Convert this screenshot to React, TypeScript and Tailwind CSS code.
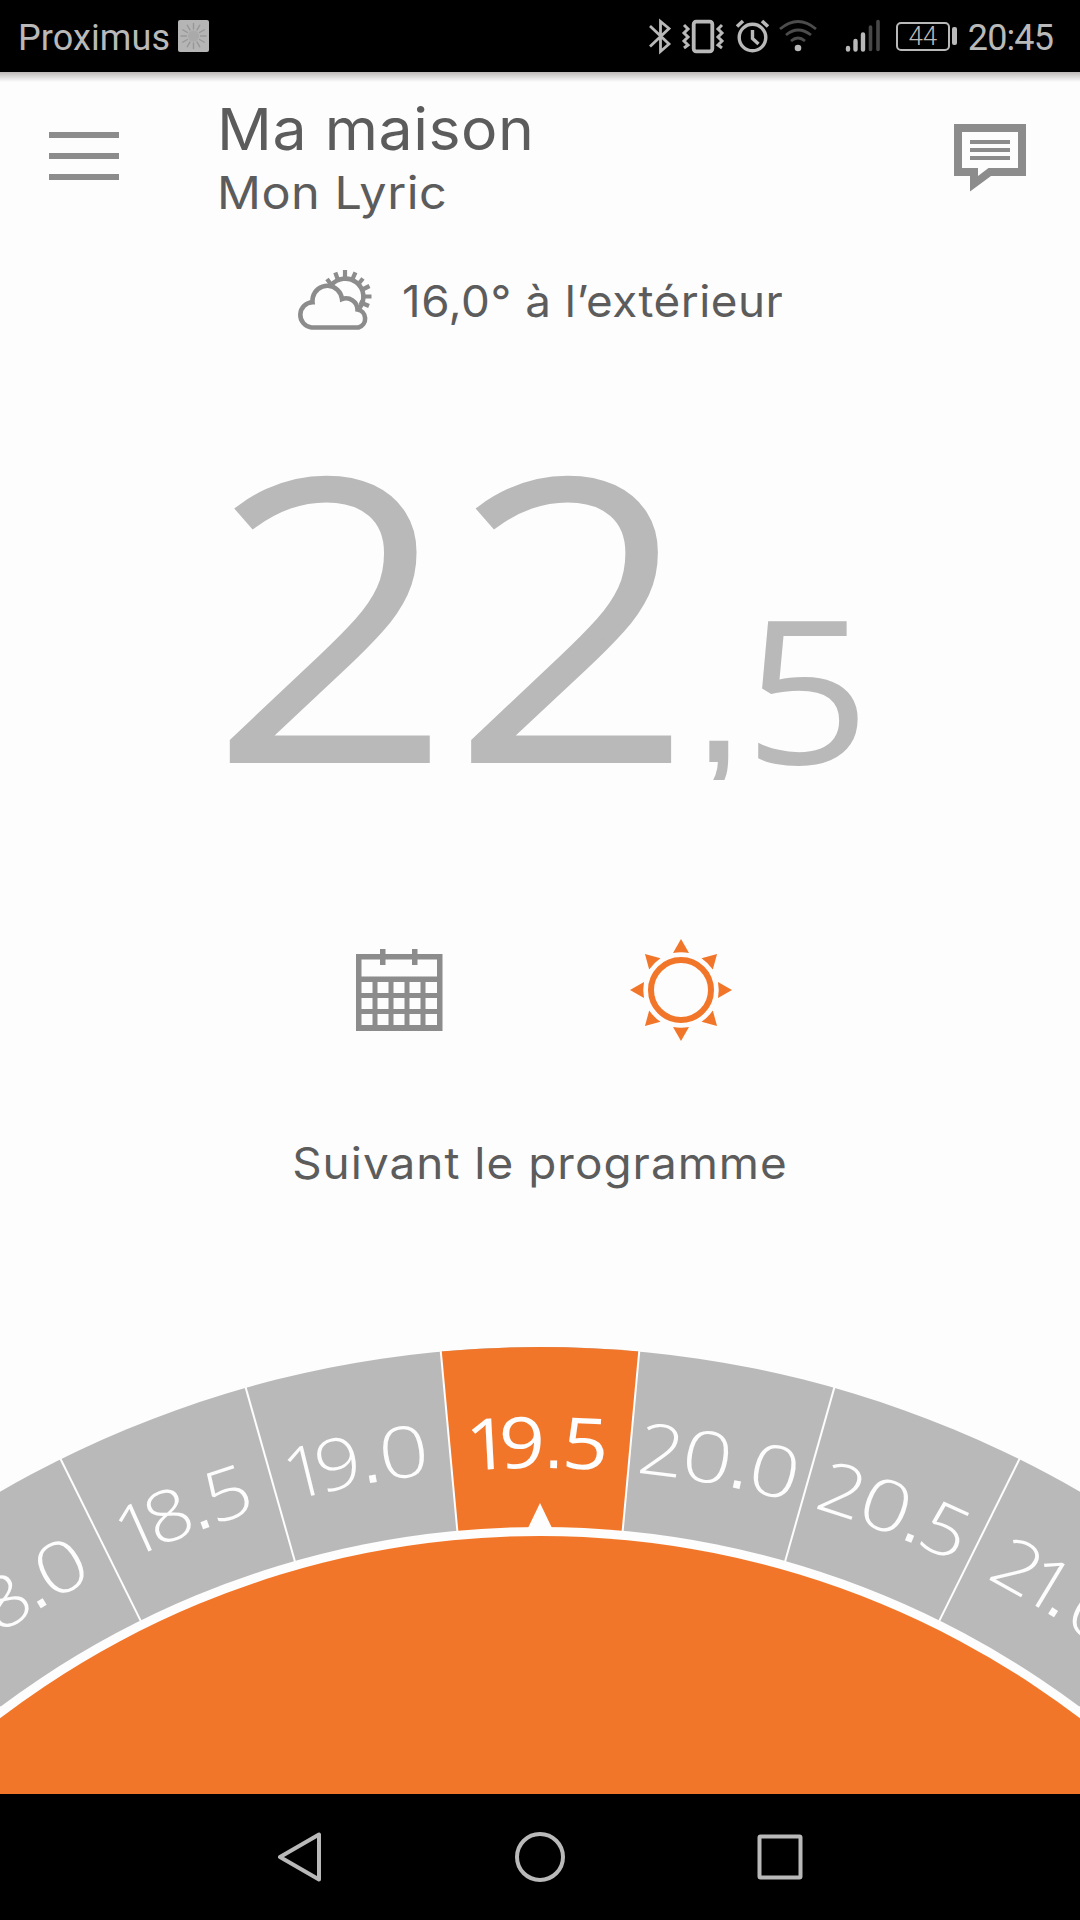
import type { ReactNode } from "react";

const CENTER_Y = 1097; // centre of the wheel, measured from the top of the dial svg

type Glyph = { char: string; angle: number };

const steps: { label: string; glyphs: Glyph[]; active?: boolean }[] = [
  {
    label: "18.0",
    glyphs: [
      { char: "1", angle: -34.95 },
      { char: "8", angle: -32.95 },
      { char: ".", angle: -31.16 },
      { char: "0", angle: -29.12 },
    ],
  },
  {
    label: "18.5",
    glyphs: [
      { char: "1", angle: -24.1 },
      { char: "8", angle: -22.19 },
      { char: ".", angle: -20.37 },
      { char: "5", angle: -18.5 },
    ],
  },
  {
    label: "19.0",
    glyphs: [
      { char: "1", angle: -13.8 },
      { char: "9", angle: -11.85 },
      { char: ".", angle: -10 },
      { char: "0", angle: -7.96 },
    ],
  },
  {
    label: "19.5",
    active: true,
    glyphs: [
      { char: "1", angle: -3.05 },
      { char: "9", angle: -1.05 },
      { char: ".", angle: 0.82 },
      { char: "5", angle: 2.65 },
    ],
  },
  {
    label: "20.0",
    glyphs: [
      { char: "2", angle: 7.1 },
      { char: "0", angle: 9.8 },
      { char: ".", angle: 11.8 },
      { char: "0", angle: 13.8 },
    ],
  },
  {
    label: "20.5",
    glyphs: [
      { char: "2", angle: 17.9 },
      { char: "0", angle: 20.59 },
      { char: ".", angle: 22.57 },
      { char: "5", angle: 24.33 },
    ],
  },
  {
    label: "21.0",
    glyphs: [
      { char: "2", angle: 29.05 },
      { char: "1", angle: 31.1 },
      { char: ".", angle: 32.2 },
      { char: "0", angle: 34.4 },
    ],
  },
];

function stretch(char: string) {
  if (char === ".") return 1;
  if (char === "0") return 1.24;
  if (char === "1") return 1.08;
  return 1.14;
}

function StatusBar() {
  return (
    <div className="flex h-[72px] items-center bg-black pl-[18px] pr-[27px] text-[#b9b9b9]">
      <span className="mt-[3px] font-['Roboto',sans-serif] text-[36px] leading-[36px] tracking-[0.1px]">Proximus</span>
      <svg className="ml-[8px]" width="32" height="32" viewBox="0 0 32 32">
        <rect width="31" height="32" rx="2" fill="#b5b5b5" />
        <g stroke="#979797" strokeWidth="1.4">
          {[0, 30, 60, 90, 120, 150, 180, 210, 240, 270, 300, 330].map((a) => (
            <path key={a} d="M15.5 9.5V3" transform={`rotate(${a} 15.5 16)`} />
          ))}
        </g>
        <circle cx="15.5" cy="16" r="5.5" fill="#aaa" />
      </svg>
      <svg className="ml-auto" width="248" height="40" viewBox="648 16 248 40" fill="none" stroke="#b9b9b9">
        {/* bluetooth */}
        <path d="M650 26L669 44L660.5 51.5V21.5L669 28.5L650 46.5" strokeWidth="2.8" />
        {/* vibrate */}
        <rect x="693.7" y="21.7" width="18.6" height="29.6" rx="2.5" strokeWidth="3.8" />
        <path d="M684 25l4 4l-4 4l4 4l-4 4l4 4l-4 3M722 25l-4 4l4 4l-4 4l4 4l-4 4l4 3" strokeWidth="3" />
        {/* alarm */}
        <circle cx="752.5" cy="37.5" r="13.3" strokeWidth="3.4" />
        <path d="M752.5 30v8.5l6 5.5" strokeWidth="3.4" />
        <path d="M737 26.5l6-5.5M768 26.5l-6-5.5" strokeWidth="3.6" />
        {/* wifi */}
        <g stroke="#4c4c4c" strokeWidth="2.8">
          <path d="M780 29Q798 14 816 29" />
          <path d="M786 35Q798 25 811 35" />
          <path d="M791 41Q798 35 805 41" />
        </g>
        <circle cx="798" cy="48" r="3.3" fill="#b9b9b9" stroke="none" />
        {/* signal */}
        <g strokeWidth="4.4" strokeLinecap="round">
          <path d="M848 48v1.5M855.5 41v8.5M863 34.5v15" />
          <path d="M870.5 27v22.5M878 21.5v28" stroke="#484848" strokeWidth="3.6" />
        </g>
      </svg>
      <div className="flex items-center">
        <div className="flex h-[29px] w-[54px] items-center justify-center rounded-[5px] border-2 border-[#b9b9b9] font-['Roboto',sans-serif] text-[26px] font-light leading-[26px]">
          44
        </div>
        <div className="ml-[2px] h-[18px] w-[5px] rounded-[2px] bg-[#b9b9b9]" />
      </div>
      <span className="ml-[11px] mt-[3px] font-['Roboto',sans-serif] text-[36px] leading-[36px] tracking-[-0.9px]">20:45</span>
    </div>
  );
}

function ChatIcon() {
  return (
    <svg width="72" height="68" viewBox="0 0 72 68" fill="#8c8c8c">
      <path fillRule="evenodd" d="M0 0H72V52H37L16 67.5V52H0ZM8 8V44H24V52L34.5 44H64V8Z" />
      <path d="M16 16h40v4H16zM16 24h40v4H16zM16 32h40v4H16z" />
    </svg>
  );
}

function WeatherIcon() {
  return (
    <svg width="76" height="62" viewBox="297 269 76 62" fill="none" stroke="#8c8c8c" strokeWidth="4.6">
      <path d="M331 285.5A16 16 0 0 1 359.5 308" />
      <g strokeWidth="4.2">
        <path d="M345 281V270M351.3 281.5L355.5 272.3M357.5 285L363 278.5M361.5 290L369.5 286M362 296.5H371.5M359.5 302L369 306M338.5 281.5L335.3 272.5M331.5 285L327 279" />
      </g>
      <path
        d="M311.5 327.5A12.7 12.7 0 0 1 312.5 302.2Q312.3 300.5 312.8 297.5A14.8 14.8 0 0 1 342 299A11.5 11.5 0 0 1 357.5 309.6A9.2 9.2 0 0 1 358.5 327.5Z"
        fill="#fdfdfd"
      />
    </svg>
  );
}

function CalendarIcon() {
  return (
    <svg width="87" height="83" viewBox="0 0 87 83" fill="#8c8c8c">
      <path
        fillRule="evenodd"
        d="M0 5H86.5V82H0ZM5.5 10.5V27.5H81V10.5ZM5.5 33v11h11v-11zM21.5 33v11h11v-11zM37.5 33v11h11v-11zM53.5 33v11h11v-11zM69.5 33v11h11.5v-11zM5.5 49v11h11v-11zM21.5 49v11h11v-11zM37.5 49v11h11v-11zM53.5 49v11h11v-11zM69.5 49v11h11.5v-11zM5.5 65v11h11v-11zM21.5 65v11h11v-11zM37.5 65v11h11v-11zM53.5 65v11h11v-11zM69.5 65v11h11.5v-11z"
      />
      <path d="M24 0h5.5v16h-5.5zM56 0h5.5v16h-5.5z" />
    </svg>
  );
}

function SunIcon() {
  return (
    <svg width="102" height="102" viewBox="-51 -51 102 102" fill="#f27629">
      <circle r="30" fill="none" stroke="#f27629" strokeWidth="6" />
      {[0, 45, 90, 135, 180, 225, 270, 315].map((a) => (
        <path key={a} d="M0 -51L8 -37Q0 -38.5 -8 -37Z" transform={`rotate(${a})`} />
      ))}
    </svg>
  );
}

function Dial() {
  return (
    <svg className="block" width="1080" height="464" viewBox="0 0 1080 464">
      <circle cx="540" cy={CENTER_Y} r="1080" fill="#b9b9b9" />
      {/* active segment */}
      <path d="M440.6 21.6A1080 1080 0 0 1 639.4 21.6L622.8 201L457.2 201Z" fill="#f27629" />
      <g stroke="#fdfdfd" strokeWidth="2">
        {[-36.89, -26.35, -15.81, -5.27, 5.27, 15.81, 26.35, 36.89].map((a) => (
          <path key={a} d="M540 16V210" transform={`rotate(${a} 540 ${CENTER_Y})`} />
        ))}
      </g>
      <circle cx="540" cy={CENTER_Y} r="900" fill="#fdfdfd" />
      <circle cx="540" cy={CENTER_Y} r="891" fill="#f27629" />
      <path d="M528 198L540 173L552 198Z" fill="#fdfdfd" />
      {steps.map((step) => (
        <g
          key={step.label}
          className={step.active ? "text-[71px] font-normal" : "text-[71px] font-light"}
          fill="#fdfdfd"
          textAnchor="middle"
        >
          {step.glyphs.map((g, i) => (
            <text
              key={i}
              className={g.char === "." ? "font-['Liberation_Sans',sans-serif]" : "font-['Open_Sans',sans-serif]"}
              transform={`rotate(${g.angle} 540 ${CENTER_Y}) translate(540 138) scale(${stretch(g.char)} 1)`}
            >
              {g.char}
            </text>
          ))}
        </g>
      ))}
    </svg>
  );
}

function NavButton({ children }: { children: ReactNode }) {
  return (
    <svg width="50" height="50" viewBox="0 0 50 50" fill="none" stroke="#b9b9b9" strokeWidth="4" strokeLinejoin="round">
      {children}
    </svg>
  );
}

export default function App() {
  return (
    <div className="flex h-[1920px] w-[1080px] flex-col overflow-hidden bg-[#fdfdfd] font-['Inter',sans-serif] text-[#5c5c5c]">
      <StatusBar />
      <div className="h-[10px] bg-gradient-to-b from-[#bdb8b8] to-[#fdfdfd]" />

      <header className="flex h-[158px] items-start pl-[49px] pr-[54px]">
        <div className="mt-[50px] flex w-[70px] flex-col gap-[15px]">
          <div className="h-[6px] bg-[#8c8c8c]" />
          <div className="h-[6px] bg-[#8c8c8c]" />
          <div className="h-[6px] bg-[#8c8c8c]" />
        </div>
        <div className="ml-[98px] mt-[18px] flex flex-col gap-[12px] whitespace-nowrap">
          <h1 className="origin-left scale-x-[1.048] text-[58px] leading-[58px] tracking-[0.5px]">Ma maison</h1>
          <h2 className="origin-left scale-x-[1.08] text-[45px] leading-[45px] tracking-[0.5px]">Mon Lyric</h2>
        </div>
        <div className="ml-auto mt-[42px]">
          <ChatIcon />
        </div>
      </header>

      <div className="flex h-[120px] pl-[297px] pt-[29px]">
        <WeatherIcon />
        <p className="ml-[29px] mt-[10px] origin-left scale-x-[1.04] whitespace-nowrap text-[44px] leading-[44px] tracking-[0.5px]">
          16,0° à l’extérieur
        </p>
      </div>

      <div className="flex h-[589px] items-baseline pl-[212px] pt-[58px] text-[#b9b9b9]">
        <span className="w-[479px] font-['Open_Sans',sans-serif] text-[383px] font-light leading-[384px] [-webkit-text-stroke:10px_#b9b9b9]">
          <span className="inline-block origin-left scale-x-[1.104]">22</span>
        </span>
        <span className="w-[52px] translate-y-[4px] font-['Liberation_Sans',sans-serif] text-[198px] leading-[198px] [clip-path:inset(0_0_13px_0)]">
          ,
        </span>
        <span className="origin-left translate-x-[1px] translate-y-[6px] scale-x-[1.11] font-['Open_Sans',sans-serif] text-[199px] font-normal leading-[199px]">
          5
        </span>
      </div>

      <div className="flex h-[192px] items-start pl-[356px]">
        <CalendarIcon />
        <div className="-mt-[10px] ml-[187px]">
          <SunIcon />
        </div>
      </div>

      <p className="h-[189px] scale-x-[1.042] whitespace-nowrap text-center text-[44px] leading-[44px] tracking-[1px]">Suivant le programme</p>

      <Dial />

      <nav className="flex h-[126px] items-center bg-black pl-[275px]">
        <NavButton>
          <path d="M5 25L44 2.5V47.5Z" />
        </NavButton>
        <div className="ml-[190px]">
          <NavButton>
            <circle cx="25" cy="25" r="23" />
          </NavButton>
        </div>
        <div className="ml-[190px]">
          <NavButton>
            <rect x="4.5" y="4.5" width="41" height="41" rx="1" />
          </NavButton>
        </div>
      </nav>
    </div>
  );
}
